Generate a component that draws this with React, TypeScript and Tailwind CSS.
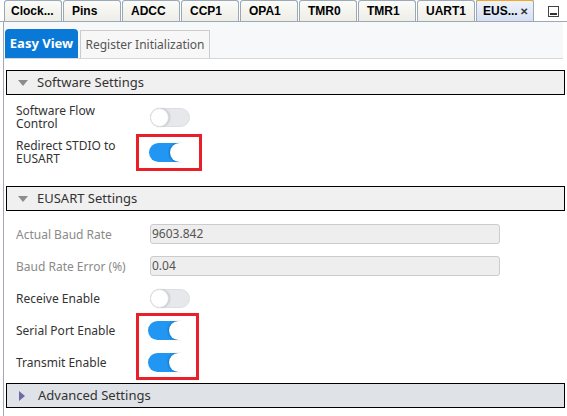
import React from "react";

const tabs = ["Clock...", "Pins", "ADCC", "CCP1", "OPA1", "TMR0", "TMR1", "UART1"];

function Toggle({ on }: { on: boolean }) {
  return on ? (
    <div className="relative h-[19px] w-[40px] rounded-full bg-[#2196f3]">
      <div className="absolute right-0 top-0 h-[19px] w-[19px] rounded-full bg-white shadow-[-1px_0_2px_rgba(0,0,0,0.25)]" />
      <div className="absolute right-0 top-0 h-[19px] w-[10px] bg-white" />
    </div>
  ) : (
    <div className="relative h-[19px] w-[40px] rounded-full border border-[#dcdee2] bg-[#e6e8eb]">
      <div className="absolute -left-px -top-px h-[19px] w-[19px] rounded-full border border-[#dcdee2] bg-white shadow-[1px_0_2px_rgba(0,0,0,0.15)]" />
    </div>
  );
}

function Header({ title, open, dark }: { title: string; open: boolean; dark?: boolean }) {
  return (
    <div
      className={`mx-[2px] flex h-[25px] shrink-0 items-center border border-black pl-[11px] text-[13px] text-[#333] ${
        dark ? "bg-[#dfe2e6]" : "bg-[#f0f0f0]"
      }`}
    >
      {open ? (
        <svg width="10" height="6" viewBox="0 0 10 6" className="mr-[9px]">
          <path d="M0 0 H10 L5 6 Z" fill="#8c8c8c" />
        </svg>
      ) : (
        <svg width="6" height="10" viewBox="0 0 6 10" className="mr-[13px] ml-[1px]">
          <path d="M0 0 L6 5 L0 10 Z" fill="#6a6aa8" />
        </svg>
      )}
      {title}
    </div>
  );
}

function Row({ label, children, gray, h = 32 }: { label: React.ReactNode; children: React.ReactNode; gray?: boolean; h?: number }) {
  return (
    <div className="flex shrink-0 items-center pl-[12px]" style={{ height: h }}>
      <div className={`w-[134px] text-[12px] leading-[13px] ${gray ? "text-[#8a8a8a]" : "text-[#333]"}`}>{label}</div>
      {children}
    </div>
  );
}

function Field({ value }: { value: string }) {
  return (
    <div className="flex h-[20px] w-[350px] items-center rounded-[3px] border border-[#cccccc] bg-[#eeeeee] pl-[1px] text-[12px] text-[#555]">
      {value}
    </div>
  );
}

export default function App() {
  return (
    <div className="flex h-[416px] w-[567px] flex-col overflow-hidden bg-white" style={{ fontFamily: '"Noto Sans", "Open Sans", sans-serif' }}>
      <div className="flex h-[22px] shrink-0 items-end gap-px border-b border-[#9aa8b8] pl-[4px]">
        {tabs.map((t) => (
          <div
            key={t}
            className="flex h-[21px] w-[58px] items-center rounded-t-[3px] border border-b-0 border-[#9aa8b8] bg-gradient-to-b from-[#fbfbf8] to-[#eeede6] pl-[6px] text-[12px] font-bold text-black"
            style={{ fontFamily: '"Liberation Sans", Arial, sans-serif' }}
          >
            {t === "Clock..." ? t : <span className="pl-[2px]">{t}</span>}
          </div>
        ))}
        <div
          className="flex h-[22px] w-[58px] items-center rounded-t-[3px] border border-b-0 border-t-2 border-[#9aa8b8] border-t-[#f5a623] bg-gradient-to-b from-[#eef2fa] to-[#d6e0f2] pl-[6px] text-[12px] font-bold text-black"
          style={{ fontFamily: '"Liberation Sans", Arial, sans-serif' }}
        >
          EUS...
          <span className="ml-auto mr-[5px] text-[10px] text-[#333]">✕</span>
        </div>
        <div className="ml-auto mr-[8px] mb-[4px] flex h-[11px] w-[11px] items-end justify-center border border-[#444] bg-white pb-[1px]">
          <div className="h-[2px] w-[7px] bg-[#333]" />
        </div>
      </div>
      <div className="ml-[3px] flex flex-1 flex-col border-l border-[#a0a8b4]">
        <div className="flex h-[37px] w-[559px] shrink-0 items-end gap-[2px] border-b border-[#d8d8d8] bg-[#f7f8fa] pl-[1px]">
          <div className="flex h-[29px] w-[73px] items-center justify-center rounded-t-[4px] bg-[#0a78d7] text-[13px] font-bold text-white">
            Easy View
          </div>
          <div className="flex h-[28px] w-[130px] items-center justify-center whitespace-nowrap border border-b-0 border-[#cccccc] bg-[#f7f7f7] text-[12px] text-[#555]">
            Register Initialization
          </div>
        </div>
        <div className="h-[11px] shrink-0" />
        <Header title="Software Settings" open />
        <div className="h-[6px] shrink-0" />
        <Row label={<>Software Flow<br />Control</>} h={32}>
          <Toggle on={false} />
        </Row>
        <Row label={<>Redirect STDIO to<br />EUSART</>} h={38}>
          <div className="-ml-[14px] flex h-[37px] w-[66px] items-center justify-center border-[3px] border-[#e8202a]">
            <Toggle on />
          </div>
        </Row>
        <div className="h-[15px] shrink-0" />
        <Header title="EUSART Settings" open />
        <div className="h-[7px] shrink-0" />
        <Row label="Actual Baud Rate" gray h={32}>
          <Field value="9603.842" />
        </Row>
        <Row label="Baud Rate Error (%)" gray h={32}>
          <Field value="0.04" />
        </Row>
        <Row label="Receive Enable" h={32}>
          <Toggle on={false} />
        </Row>
        <div className="flex shrink-0 pl-[12px]">
          <div className="flex w-[120px] flex-col text-[12px] leading-[13px] text-[#333]">
            <div className="flex h-[32px] items-center">Serial Port Enable</div>
            <div className="flex h-[32px] items-center">Transmit Enable</div>
          </div>
          <div className="-mt-[1px] flex h-[67px] w-[63px] flex-col items-center justify-center gap-[13px] border-[3px] border-[#e8202a]">
            <Toggle on />
            <Toggle on />
          </div>
        </div>
        <div className="h-[3px] shrink-0" />
        <Header title="Advanced Settings" open={false} dark />
      </div>
    </div>
  );
}
